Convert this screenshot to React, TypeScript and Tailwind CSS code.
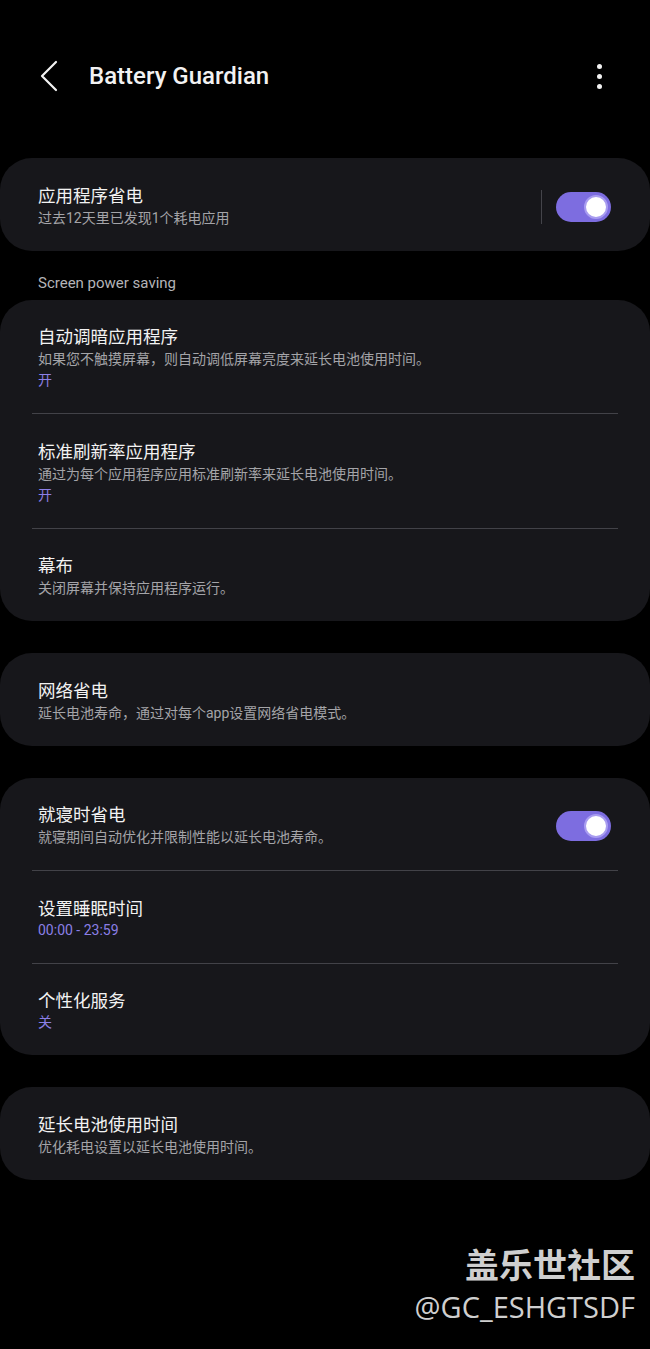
import React from "react";

const FONT = { fontFamily: '"Roboto", "Noto Sans CJK SC", sans-serif' };

function Toggle() {
  return (
    <div className="relative h-[30px] w-[55px] shrink-0 rounded-full bg-[#7d6de0]">
      <div className="absolute right-[3px] top-[3px] h-[24px] w-[24px] rounded-full border-[2px] border-[#a89cf0] bg-white" />
    </div>
  );
}

function Item({
  title,
  sub,
  status,
  right,
}: {
  title: string;
  sub?: string;
  status?: string;
  right?: React.ReactNode;
}) {
  return (
    <div className="flex items-center pl-[38px] pr-[39px] pt-[26.5px] pb-[22px]">
      <div className="flex min-w-0 flex-1 flex-col">
        <div className="text-[17.5px] leading-[22px] text-[#f2f2f2]">{title}</div>
        {sub && <div className="mt-[1px] text-[14px] leading-[21px] text-[#a4a4a8]">{sub}</div>}
        {status && <div className="text-[14px] leading-[21px] text-[#8b7fe6]">{status}</div>}
      </div>
      {right}
    </div>
  );
}

function Divider() {
  return <div className="mx-[32px] h-[1px] bg-[#424248]" />;
}

function Card({ children }: { children: React.ReactNode }) {
  return <div className="rounded-[32px] bg-[#17171b]">{children}</div>;
}

export default function App() {
  return (
    <div className="min-h-[1349px] w-[650px] bg-black pt-[58px]" style={FONT}>
      <div className="flex h-[36px] items-center">
        <div className="ml-[38px] flex h-[36px] w-[24px] items-center">
          <svg width="22" height="34" viewBox="0 0 22 34" fill="none">
            <path d="M18 3 L4 17 L18 31" stroke="#f2f2f2" strokeWidth="2.2" strokeLinecap="round" strokeLinejoin="round" />
          </svg>
        </div>
        <div className="ml-[27px] flex-1 text-[24px] font-medium leading-[36px] text-[#f2f2f2]">Battery Guardian</div>
        <div className="mr-[48px] flex flex-col items-center gap-[5px]">
          <div className="h-[5px] w-[5px] rounded-full bg-[#f2f2f2]" />
          <div className="h-[5px] w-[5px] rounded-full bg-[#f2f2f2]" />
          <div className="h-[5px] w-[5px] rounded-full bg-[#f2f2f2]" />
        </div>
      </div>

      <div className="mt-[64px] flex flex-col">
        <Card>
          <Item
            title="应用程序省电"
            sub="过去12天里已发现1个耗电应用"
            right={
              <div className="flex items-center">
                <div className="mr-[14px] h-[34px] w-[1px] bg-[#44444a]" />
                <Toggle />
              </div>
            }
          />
        </Card>

        <div className="pl-[38px] pt-[22px] pb-[7px] text-[15px] leading-[20px] text-[#b4b4b8]">Screen power saving</div>

        <Card>
          <Item title="自动调暗应用程序" sub="如果您不触摸屏幕，则自动调低屏幕亮度来延长电池使用时间。" status="开" />
          <Divider />
          <Item title="标准刷新率应用程序" sub="通过为每个应用程序应用标准刷新率来延长电池使用时间。" status="开" />
          <Divider />
          <Item title="幕布" sub="关闭屏幕并保持应用程序运行。" />
        </Card>

        <div className="h-[32px]" />
        <Card>
          <Item title="网络省电" sub="延长电池寿命，通过对每个app设置网络省电模式。" />
        </Card>

        <div className="h-[32px]" />
        <Card>
          <Item title="就寝时省电" sub="就寝期间自动优化并限制性能以延长电池寿命。" right={<Toggle />} />
          <Divider />
          <Item title="设置睡眠时间" status="00:00 - 23:59" />
          <Divider />
          <Item title="个性化服务" status="关" />
        </Card>

        <div className="h-[32px]" />
        <Card>
          <Item title="延长电池使用时间" sub="优化耗电设置以延长电池使用时间。" />
        </Card>
      </div>

      <div className="mt-[64px] flex flex-col items-end pr-[15px] text-[#cfcfcf]">
        <div className="text-[34px] font-bold leading-[40px]" style={{ fontFamily: '"Noto Sans CJK SC", sans-serif' }}>盖乐世社区</div>
        <div className="mt-[4px] text-[29px] leading-[38px]" style={{ fontFamily: '"Open Sans", sans-serif' }}>@GC_ESHGTSDF</div>
      </div>
    </div>
  );
}
